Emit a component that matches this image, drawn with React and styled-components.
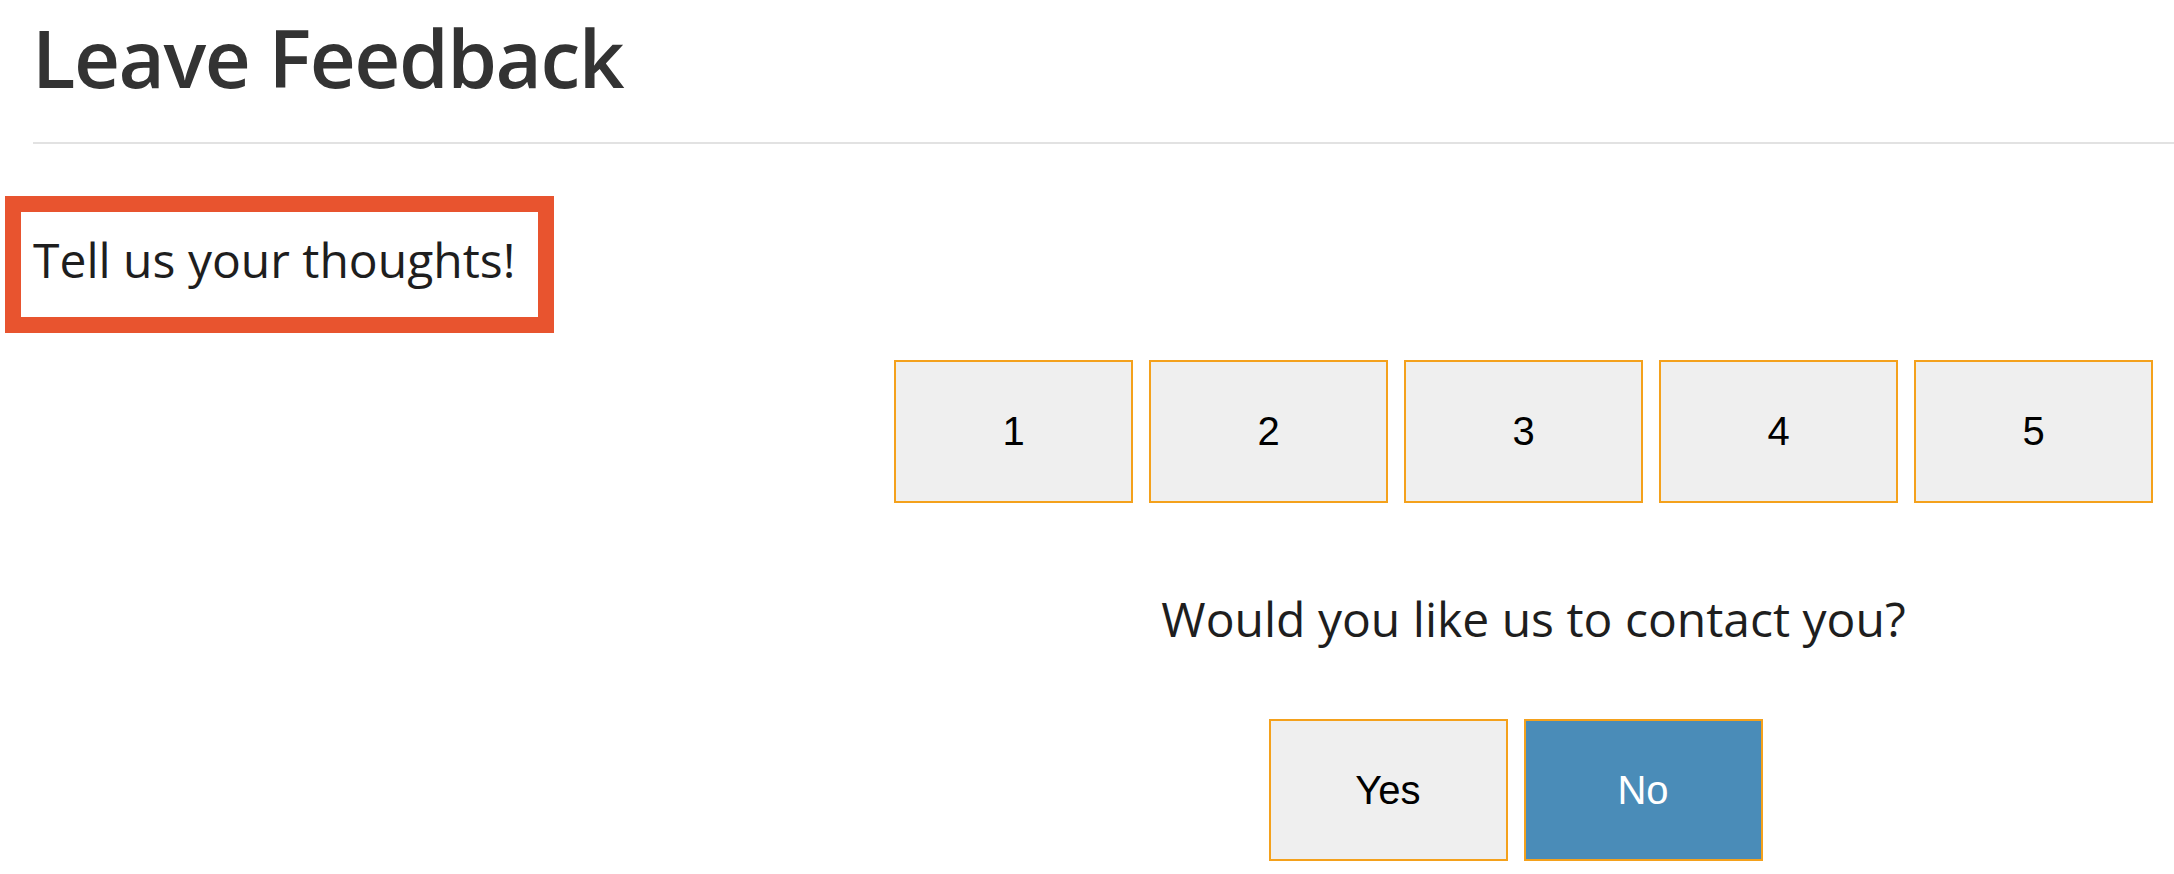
import styled, { createGlobalStyle } from "styled-components";

const GlobalStyle = createGlobalStyle`
    html, body {
        margin: 0;
        padding: 0;
        background: #ffffff;
    }
    body {
        font-family: "Open Sans", "Liberation Sans", sans-serif;
        color: #222222;
    }
`;

const Page = styled.div`
    display: flex;
    flex-direction: column;
    width: 2174px;
    min-height: 874px;
`;

const Title = styled.h1`
    margin: 2px 0 0 32px;
    font-size: 80px;
    font-weight: 600;
    letter-spacing: -1.5px;
    line-height: normal;
    color: #333333;
`;

const Divider = styled.hr`
    margin: 31px 0 0 33px;
    height: 2px;
    border: none;
    background: #e2e2e2;
`;

const Highlight = styled.div`
    align-self: flex-start;
    margin: 52px 0 0 5px;
    border: 16px solid #e8542f;
    padding: 12px 23px 21px 12px;
`;

const Prompt = styled.p`
    margin: 0;
    font-size: 48px;
    line-height: 72px;
    font-weight: 400;
    color: #1e1e1e;
`;

const Panel = styled.section`
    display: flex;
    flex-direction: column;
    align-items: center;
    align-self: flex-end;
    width: 1259px;
    margin: 27px 21px 0 0;
`;

const Ratings = styled.div`
    display: flex;
    gap: 16px;
    width: 100%;
`;

const Choice = styled.button`
    display: flex;
    align-items: center;
    justify-content: center;
    width: 239px;
    height: ${(p) => p.$h || 143}px;
    box-sizing: border-box;
    border: 2px solid #f4a11c;
    background: ${(p) => (p.$active ? "#4a8cb8" : "#efefef")};
    color: ${(p) => (p.$active ? "#ffffff" : "#000000")};
    font-family: "Liberation Sans", Arial, sans-serif;
    font-size: 40px;
    padding: 0;
    cursor: pointer;
`;

const Question = styled.p`
    margin: 83px 0 0 20px;
    font-size: 48px;
    line-height: normal;
    font-weight: 400;
    color: #1e1e1e;
`;

const Answers = styled.div`
    display: flex;
    gap: 16px;
    margin-top: 68px;
    padding-right: 16px;
`;

function App() {
    return (
        <Page>
            <GlobalStyle />
            <Title>Leave Feedback</Title>
            <Divider />
            <Highlight>
                <Prompt>Tell us your thoughts!</Prompt>
            </Highlight>
            <Panel>
                <Ratings>
                    {[1, 2, 3, 4, 5].map((n) => (
                        <Choice key={n}>{n}</Choice>
                    ))}
                </Ratings>
                <Question>Would you like us to contact you?</Question>
                <Answers>
                    <Choice $h={142}>Yes</Choice>
                    <Choice $h={142} $active>
                        No
                    </Choice>
                </Answers>
            </Panel>
        </Page>
    );
}

export default App;
